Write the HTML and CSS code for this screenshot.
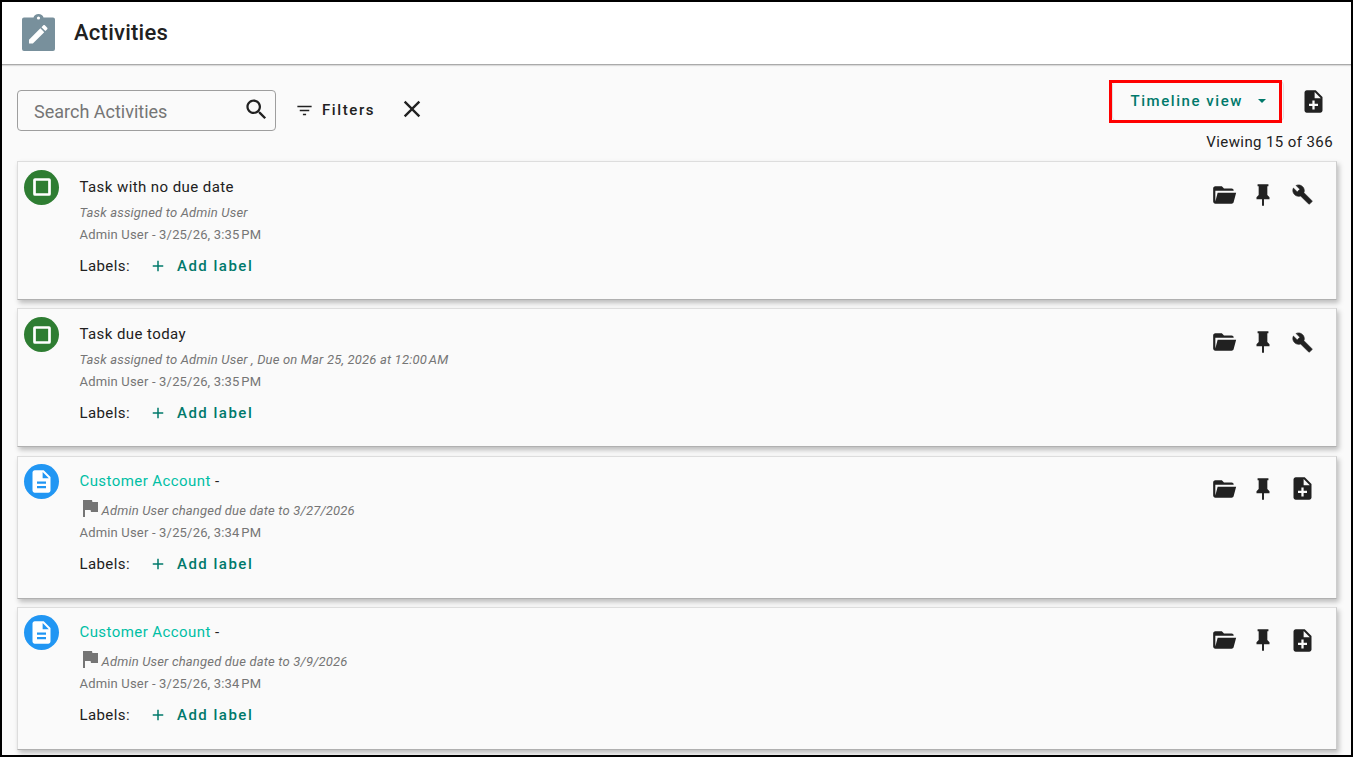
FILE: index.html
```html
<!DOCTYPE html>
<html lang="en">
<head>
    <meta charset="UTF-8">
    <title>Activities</title>
    <link rel="stylesheet" href="styles.css">
</head>
<body>
    <div class="frame">
        <header class="topbar">
            <svg class="page-icon" viewBox="0 0 33 37"><path fill="#78909c" d="M2 3.500H11.500C12 1.300 14 0 16.500 0S21 1.300 21.500 3.500H31A2 2 0 0 1 33 5.500V35A2 2 0 0 1 31 37H2A2 2 0 0 1 0 35V5.500A2 2 0 0 1 2 3.500Z"/><circle cx="16.500" cy="4" r="1.600" fill="#fff"/><path fill="#fff" transform="translate(3.900 7.900) scale(1.030)" d="M3 17.250V21h3.750L17.810 9.940l-3.750-3.750L3 17.250zM20.710 7.040c.39-.39.39-1.020 0-1.410l-2.340-2.340c-.39-.39-1.020-.39-1.410 0l-1.830 1.830 3.750 3.750 1.830-1.830z"/></svg>
            <h1>Activities</h1>
        </header>

        <div class="toolbar">
            <div class="search">
                <span class="search-text">Search Activities</span>
                <svg class="icon-search" viewBox="0 0 24 24"><path d="M15.500 14h-.79l-.28-.27C15.410 12.590 16 11.110 16 9.500 16 5.910 13.090 3 9.500 3S3 5.910 3 9.500 5.910 16 9.500 16c1.610 0 3.090-.59 4.230-1.570l.27.28v.79l5 4.990L20.490 19l-4.990-5zm-6 0C7.010 14 5 11.990 5 9.500S7.010 5 9.500 5 14 7.010 14 9.500 11.990 14 9.500 14z"/></svg>
            </div>
            <div class="filters">
                <svg class="icon-filter" viewBox="0 0 24 24"><path d="M10 18h4v-2h-4v2zM3 6v2h18V6H3zm3 7h12v-2H6v2z"/></svg>
                <span>Filters</span>
            </div>
            <svg class="icon-clear" viewBox="0 0 24 24"><path d="M19 6.410L17.590 5 12 10.590 6.410 5 5 6.410 10.590 12 5 17.590 6.410 19 12 13.410 17.590 19 19 17.590 13.410 12z"/></svg>
            <div class="toolbar-right">
                <div class="view-row">
                    <div class="view-btn">
                        <span>Timeline view</span>
                        <span class="caret"></span>
                        <span class="highlight"></span>
                    </div>
                    <svg class="add-note" viewBox="0 0 24 24"><path d="M14 2H6c-1.100 0-1.990.9-1.990 2L4 20c0 1.100.89 2 1.990 2H18c1.100 0 2-.9 2-2V8l-6-6zm2 14h-3v3h-2v-3H8v-2h3v-3h2v3h3v2zm-3-7V3.500L18.500 9H13z"/></svg>
                </div>
                <div class="viewing">Viewing 15 of 366</div>
            </div>
        </div>

        <div class="list">
            <div class="card">
                <div class="badge badge-green"><svg viewBox="0 0 24 24"><rect x="4.500" y="4.500" width="15" height="15" rx="0.500"/></svg></div>
                <div class="card-body">
                    <div class="card-title">Task with no due date</div>
                    <div class="card-sub">Task assigned to Admin User</div>
                    <div class="card-meta">Admin User - 3/25/26, 3:35&#8239;PM</div>
                    <div class="labels"><span>Labels:</span><svg class="plus" viewBox="0 0 24 24"><path d="M19 13h-6v6h-2v-6H5v-2h6V5h2v6h6v2z"/></svg><span class="add-label">Add label</span></div>
                </div>
                <div class="actions">
                    <span class="action"><svg class="i-folder" viewBox="0 0 24 24"><path d="M19 20H4C2.890 20 2 19.100 2 18V6C2 4.890 2.890 4 4 4H10L12 6H19A2 2 0 0 1 21 8H4V18L6.140 10H23.210L20.930 18.500C20.700 19.370 19.920 20 19 20Z"/></svg></span>
                    <span class="action"><svg class="i-pin" viewBox="0 0 24 24"><path d="M16 12V4H17V2H7V4H8V12L6 14V16H11.100V22H12.900V16H18V14L16 12Z"/></svg></span>
                    <span class="action"><svg class="i-wrench" viewBox="0 0 24 24"><path d="M22.700 19l-9.100-9.100c.9-2.300.4-5-1.500-6.900-2-2-5-2.400-7.400-1.300L9 6 6 9 1.600 4.700C.4 7.100.9 10.100 2.900 12.100c1.900 1.900 4.600 2.400 6.900 1.500l9.100 9.100c.4.4 1 .4 1.400 0l2.300-2.300c.5-.4.5-1.100.1-1.400z"/></svg></span>
                </div>
            </div>

            <div class="card">
                <div class="badge badge-green"><svg viewBox="0 0 24 24"><rect x="4.500" y="4.500" width="15" height="15" rx="0.500"/></svg></div>
                <div class="card-body">
                    <div class="card-title">Task due today</div>
                    <div class="card-sub">Task assigned to Admin User , Due on Mar 25, 2026 at 12:00&#8239;AM</div>
                    <div class="card-meta">Admin User - 3/25/26, 3:35&#8239;PM</div>
                    <div class="labels"><span>Labels:</span><svg class="plus" viewBox="0 0 24 24"><path d="M19 13h-6v6h-2v-6H5v-2h6V5h2v6h6v2z"/></svg><span class="add-label">Add label</span></div>
                </div>
                <div class="actions">
                    <span class="action"><svg class="i-folder" viewBox="0 0 24 24"><path d="M19 20H4C2.890 20 2 19.100 2 18V6C2 4.890 2.890 4 4 4H10L12 6H19A2 2 0 0 1 21 8H4V18L6.140 10H23.210L20.930 18.500C20.700 19.370 19.920 20 19 20Z"/></svg></span>
                    <span class="action"><svg class="i-pin" viewBox="0 0 24 24"><path d="M16 12V4H17V2H7V4H8V12L6 14V16H11.100V22H12.900V16H18V14L16 12Z"/></svg></span>
                    <span class="action"><svg class="i-wrench" viewBox="0 0 24 24"><path d="M22.700 19l-9.100-9.100c.9-2.300.4-5-1.500-6.900-2-2-5-2.400-7.400-1.300L9 6 6 9 1.600 4.700C.4 7.100.9 10.100 2.900 12.100c1.900 1.900 4.600 2.400 6.900 1.500l9.100 9.100c.4.4 1 .4 1.400 0l2.300-2.300c.5-.4.5-1.100.1-1.400z"/></svg></span>
                </div>
            </div>

            <div class="card card-tall">
                <div class="badge badge-blue"><svg viewBox="0 0 24 24"><path d="M14 2H6c-1.100 0-1.990.9-1.990 2L4 20c0 1.100.89 2 1.990 2H18c1.100 0 2-.9 2-2V8l-6-6zm2 16H8v-2h8v2zm0-4H8v-2h8v2zm-3-5V3.500L18.500 9H13z"/></svg></div>
                <div class="card-body">
                    <div class="card-title"><span class="link">Customer Account</span> -</div>
                    <div class="card-sub card-sub-flag"><svg viewBox="0 0 24 24"><path d="M14.400 6L14 4H5v17h2v-7h5.600l.4 2h7V6z"/></svg><span>Admin User changed due date to 3/27/2026</span></div>
                    <div class="card-meta">Admin User - 3/25/26, 3:34&#8239;PM</div>
                    <div class="labels"><span>Labels:</span><svg class="plus" viewBox="0 0 24 24"><path d="M19 13h-6v6h-2v-6H5v-2h6V5h2v6h6v2z"/></svg><span class="add-label">Add label</span></div>
                </div>
                <div class="actions">
                    <span class="action"><svg class="i-folder" viewBox="0 0 24 24"><path d="M19 20H4C2.890 20 2 19.100 2 18V6C2 4.890 2.890 4 4 4H10L12 6H19A2 2 0 0 1 21 8H4V18L6.140 10H23.210L20.930 18.500C20.700 19.370 19.920 20 19 20Z"/></svg></span>
                    <span class="action"><svg class="i-pin" viewBox="0 0 24 24"><path d="M16 12V4H17V2H7V4H8V12L6 14V16H11.100V22H12.900V16H18V14L16 12Z"/></svg></span>
                    <span class="action"><svg class="i-note" viewBox="0 0 24 24"><path d="M14 2H6c-1.100 0-1.990.9-1.990 2L4 20c0 1.100.89 2 1.990 2H18c1.100 0 2-.9 2-2V8l-6-6zm2 14h-3v3h-2v-3H8v-2h3v-3h2v3h3v2zm-3-7V3.500L18.500 9H13z"/></svg></span>
                </div>
            </div>

            <div class="card card-tall">
                <div class="badge badge-blue"><svg viewBox="0 0 24 24"><path d="M14 2H6c-1.100 0-1.990.9-1.990 2L4 20c0 1.100.89 2 1.990 2H18c1.100 0 2-.9 2-2V8l-6-6zm2 16H8v-2h8v2zm0-4H8v-2h8v2zm-3-5V3.500L18.500 9H13z"/></svg></div>
                <div class="card-body">
                    <div class="card-title"><span class="link">Customer Account</span> -</div>
                    <div class="card-sub card-sub-flag"><svg viewBox="0 0 24 24"><path d="M14.400 6L14 4H5v17h2v-7h5.600l.4 2h7V6z"/></svg><span>Admin User changed due date to 3/9/2026</span></div>
                    <div class="card-meta">Admin User - 3/25/26, 3:34&#8239;PM</div>
                    <div class="labels"><span>Labels:</span><svg class="plus" viewBox="0 0 24 24"><path d="M19 13h-6v6h-2v-6H5v-2h6V5h2v6h6v2z"/></svg><span class="add-label">Add label</span></div>
                </div>
                <div class="actions">
                    <span class="action"><svg class="i-folder" viewBox="0 0 24 24"><path d="M19 20H4C2.890 20 2 19.100 2 18V6C2 4.890 2.890 4 4 4H10L12 6H19A2 2 0 0 1 21 8H4V18L6.140 10H23.210L20.930 18.500C20.700 19.370 19.920 20 19 20Z"/></svg></span>
                    <span class="action"><svg class="i-pin" viewBox="0 0 24 24"><path d="M16 12V4H17V2H7V4H8V12L6 14V16H11.100V22H12.900V16H18V14L16 12Z"/></svg></span>
                    <span class="action"><svg class="i-note" viewBox="0 0 24 24"><path d="M14 2H6c-1.100 0-1.990.9-1.990 2L4 20c0 1.100.89 2 1.990 2H18c1.100 0 2-.9 2-2V8l-6-6zm2 14h-3v3h-2v-3H8v-2h3v-3h2v3h3v2zm-3-7V3.500L18.500 9H13z"/></svg></span>
                </div>
            </div>
        </div>
    </div>
</body>
</html>
```

FILE: styles.css
```css
* {
    box-sizing: border-box;
}
html, body {
    margin: 0;
    padding: 0;
    overflow: hidden;
}
body {
    font-family: Roboto, Arial, sans-serif;
    color: #212121;
}
.frame {
    width: 1353px;
    height: 757px;
    border: 2px solid #000;
    background-color: #fafafa;
    overflow: hidden;
}
.topbar {
    height: 63px;
    background-color: #fff;
    border-bottom: 1px solid #aaa;
    box-shadow: 0 1px 1px rgba(0, 0, 0, 0.12);
    display: flex;
    align-items: center;
    padding: 0 0 2px 20px;
}
.page-icon {
    width: 33px;
    height: 37px;
    margin-right: 19px;
}
h1 {
    font-size: 22px;
    font-weight: 500;
    margin: 0;
    letter-spacing: 0.25px;
}
.toolbar {
    display: flex;
    align-items: flex-start;
    padding: 15px 18px 0 15px;
    height: 95.6px;
}
.search {
    width: 259px;
    height: 41px;
    margin-top: 10px;
    border: 1px solid #9e9e9e;
    border-radius: 4px;
    display: flex;
    align-items: center;
    justify-content: space-between;
    padding: 2px 5px 0 16px;
}
.search-text {
    font-size: 18px;
    color: #757575;
}
.icon-search {
    width: 27px;
    height: 27px;
    fill: #212121;
    margin-bottom: 4px;
}
.filters {
    display: flex;
    align-items: center;
    margin: 20px 0 0 19px;
    font-size: 15px;
    font-weight: 500;
    letter-spacing: 1.6px;
    height: 20px;
}
.icon-filter {
    width: 19px;
    height: 19px;
    fill: #212121;
    margin-right: 8px;
}
.icon-clear {
    width: 28px;
    height: 28px;
    margin: 15px 0 0 23px;
    fill: #212121;
}
.toolbar-right {
    margin-left: auto;
    display: flex;
    flex-direction: column;
    align-items: flex-end;
}
.view-row {
    display: flex;
    align-items: center;
    margin-top: 1px;
}
.view-btn {
    position: relative;
    width: 172px;
    height: 40px;
    border: 1px solid #e0e0e0;
    border-radius: 4px;
    display: flex;
    align-items: center;
    color: #00796b;
    font-size: 15px;
    font-weight: 500;
    letter-spacing: 1.56px;
    padding-left: 18px;
}
/* red marker drawn over the button */
.highlight {
    position: absolute;
    left: -4px;
    top: -2px;
    width: 173.5px;
    height: 43px;
    border: 3px solid #f00;
}
.caret {
    width: 0;
    height: 0;
    margin-left: 15px;
    border-left: 4.5px solid transparent;
    border-right: 4.5px solid transparent;
    border-top: 4.5px solid #00796b;
}
.add-note {
    width: 27px;
    height: 27px;
    fill: #212121;
    margin: 0 6.5px 0 16px;
}
.viewing {
    font-size: 15px;
    letter-spacing: 0.4px;
    margin-top: 12px;
}
.list {
    padding: 0 14px 0 15px;
}
.card {
    height: 139px;
    margin-bottom: 8.5px;
    background-color: #fafafa;
    border: 1px solid #ddd;
    border-bottom-color: #b0b0b0;
    border-right-color: #ccc;
    box-shadow: 2px 3px 5px rgba(0, 0, 0, 0.25);
    display: flex;
    padding: 8px 0 0 6px;
}
.card-tall {
    height: 143px;
    padding-top: 7px;
}
.badge {
    width: 35px;
    height: 35px;
    border-radius: 50%;
    flex-shrink: 0;
    display: flex;
    align-items: center;
    justify-content: center;
}
.badge-green {
    background-color: #2e7d32;
}
.badge-green svg {
    width: 24px;
    height: 24px;
    fill: none;
    stroke: #fff;
    stroke-width: 2.7;
}
.badge-blue {
    background-color: #2196f3;
}
.badge-blue svg {
    width: 27px;
    height: 27px;
    fill: #fff;
}
.card-body {
    margin-left: 20.5px;
    flex: 1;
}
.card-title {
    font-size: 15px;
    letter-spacing: 0.42px;
    line-height: 20px;
    margin-top: 7px;
}
.link {
    color: #00bfa5;
}
.card-sub {
    font-size: 13px;
    font-style: italic;
    letter-spacing: 0.18px;
    color: #757575;
    line-height: 16px;
    margin-top: 8px;
}
.card-sub-flag {
    display: flex;
    align-items: flex-end;
    height: 23px;
    margin-top: 5px;
}
.card-sub-flag svg {
    width: 24px;
    height: 24px;
    fill: #757575;
    margin: 0 0 -1px -2px;
}
.card-meta {
    font-size: 13px;
    letter-spacing: 0.18px;
    color: #757575;
    line-height: 16px;
    margin-top: 6px;
}
.labels {
    display: flex;
    align-items: center;
    font-size: 15px;
    letter-spacing: 0.4px;
    line-height: 20px;
    margin-top: 13px;
}
.plus {
    width: 18px;
    height: 18px;
    fill: #00796b;
    margin: 0 10px 0 19px;
}
.add-label {
    color: #00796b;
    font-weight: 500;
    letter-spacing: 1.5px;
}
.actions {
    display: flex;
    margin: 11px 13.5px 0 0;
}
.action {
    width: 39.5px;
    height: 28px;
    display: flex;
    align-items: center;
    justify-content: center;
}
.action svg {
    fill: #212121;
}
.i-folder, .i-pin {
    width: 26px;
    height: 26px;
}
.i-wrench {
    width: 21px;
    height: 21px;
    stroke: #212121;
    stroke-width: 0.8;
}
.i-note {
    width: 27px;
    height: 27px;
}
```
